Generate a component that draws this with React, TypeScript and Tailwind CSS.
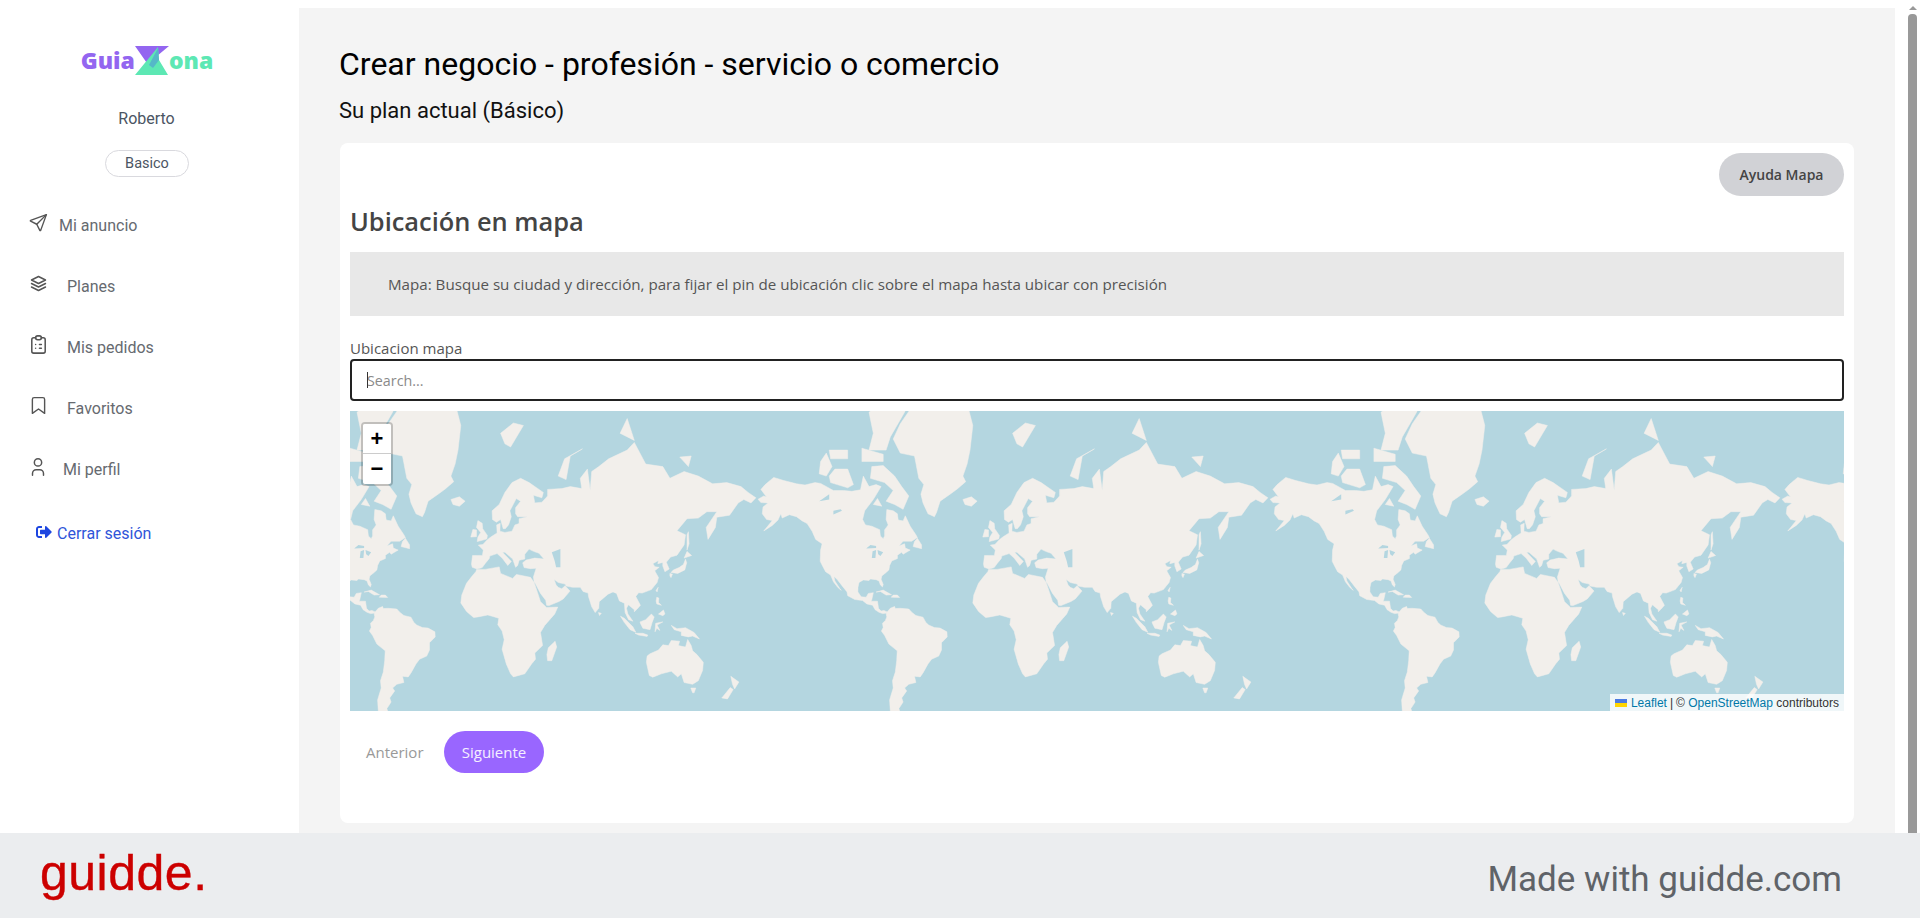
import { FiBookmark } from 'react-icons/fi'
import { TbSend, TbStack2, TbClipboardList, TbUser } from 'react-icons/tb'
import { FaSignOutAlt } from 'react-icons/fa'

type Ring = [number, number][]

// lon/lat outlines, projected to web mercator at zoom 1 below
const LAND: Ring[] = [
  // north america
  [[-168,65.6],[-164,66.5],[-162,66.2],[-166,68.3],[-163,69.5],[-157,71.2],[-150,70.5],[-141,69.7],[-135,69.4],[-128,70],[-124,69.8],[-115,68],[-108,68],[-102,67.8],[-96,68.2],[-94,71.5],[-90,69],[-85,69.5],[-81.5,69],[-87,65.5],[-93,62],[-94.5,59],[-92.5,57],[-88,56.5],[-82.5,55.1],[-82,52.5],[-80,51.3],[-79,52.5],[-79,55],[-76.5,57],[-78,59],[-77.5,62.4],[-73,62],[-70,61],[-69.5,58.8],[-66,58.5],[-64.5,60.3],[-61,56.5],[-57,53],[-56,51.8],[-60,50.2],[-66,50.2],[-69,48],[-65,49],[-64.5,47],[-61,46],[-66,44],[-67,45],[-70,43.5],[-70,41.7],[-74,40.5],[-75.5,38],[-76,35.5],[-78,34],[-81,32],[-81.5,30],[-80,26.8],[-80.5,25.2],[-82,26.5],[-83,29],[-85,29.7],[-89,30.2],[-90,29.2],[-94,29.6],[-97,28],[-97.7,25],[-97.8,22],[-95.5,18.8],[-92,18.5],[-90.5,21],[-87,21.5],[-88,17],[-88.5,15.8],[-84,15.8],[-83.3,11],[-81.5,9],[-79.5,9.5],[-77.3,8.5],[-78.5,7.5],[-80.5,7.3],[-83,8.2],[-85.7,10],[-87.5,13],[-91.5,14],[-94.5,16.2],[-100,17],[-105,19.5],[-105.5,22],[-109,26],[-112.5,30],[-114.7,31.7],[-114,29],[-110.5,24.2],[-109.5,23],[-112,25],[-115,28.5],[-117,32.5],[-120.5,34.5],[-122.5,37.5],[-124.3,40.3],[-124,46],[-123,49],[-127.5,51],[-130,54.5],[-133.5,57.5],[-137,58.5],[-141,60],[-146,60.7],[-151,59.5],[-152,61],[-154,58.8],[-158,56.8],[-164,54.6],[-158,58.6],[-162,59],[-165,61],[-164.5,63.2],[-161,64.5],[-166,64.6]],
  // greenland
  [[-73,78.2],[-68,80.2],[-60,82],[-45,82.6],[-30,83.5],[-20,81.8],[-17,80],[-19,76.5],[-21,74],[-24,71.5],[-22,70.2],[-28,68.4],[-33,67],[-40,65],[-42.5,61.5],[-44,60],[-48.5,61],[-52,64.5],[-53.5,67],[-51.5,69.5],[-55,71],[-58,75.5],[-68,76]],
  // arctic islands
  [[-80,73.7],[-72,71.5],[-67,69],[-62,66.5],[-66,62.5],[-72,64],[-78,65],[-73,68],[-79,70],[-89,71],[-88,73.5]],
  [[-117,70],[-105,68.7],[-101,69.5],[-105,73],[-114,73],[-118,71.5]],
  [[-125,72],[-120,71.5],[-116,73.5],[-120,76],[-124,74.5]],
  [[-90,76.5],[-78,76.5],[-75,78.5],[-65,81.5],[-62,82.5],[-75,83],[-90,81.5],[-87,79]],
  [[-95,74.5],[-80,74.5],[-80,75.8],[-95,76.8]],
  [[-117,75],[-105,75],[-105,76.5],[-118,76.5]],
  [[-87,64],[-81,63.5],[-84,65.8]],
  [[-59,47.7],[-53,46.7],[-53,48.5],[-56,51.5],[-58,50]],
  [[-85,21.9],[-80,23.2],[-74.2,20.2],[-78,19.9],[-82,22.3]],
  [[-74.4,18.5],[-68.5,18.4],[-70,19.9],[-73,19.9]],
  [[-24,65.5],[-18,66.3],[-14,65],[-18,63.5],[-22.5,64]],
  [[11,79],[20,80.3],[27,80],[18,77],[14,77.5]],
  // south america
  [[-77.3,8.5],[-75,11],[-72,12.2],[-71.5,10.8],[-68,11],[-62,10.5],[-60,8.3],[-57,6],[-52,4.8],[-50,1],[-48,-0.7],[-44,-2.5],[-40,-2.9],[-35.2,-5.5],[-35,-9],[-39,-13],[-39,-18],[-41,-22],[-46,-24],[-48.5,-27],[-52,-32.5],[-54,-34.8],[-58,-34.5],[-57,-38],[-62,-39],[-65,-41],[-63.5,-42.5],[-67,-46],[-66,-48],[-69,-51],[-68.3,-52.5],[-65.5,-55],[-71,-55],[-75,-52],[-75.5,-47],[-73,-41],[-73.5,-37],[-71.5,-32],[-70.5,-25],[-70.2,-18.5],[-76,-14],[-79,-8],[-81.3,-5],[-80,-2.5],[-80.5,0.5],[-78.5,2.5],[-77.5,5],[-78,7.5]],
  // eurasia
  [[-9,37],[-9.5,38.8],[-8.8,43.3],[-1.8,43.4],[-1.2,46],[-4.7,48.4],[-1.5,48.7],[1.5,50.8],[4,52],[8.5,53.8],[8.2,57],[10.7,57.6],[10.5,54.5],[14,54],[19,54.5],[21,57],[24,57.5],[24,59.3],[30,60],[23,60],[21.5,61],[21.5,63],[25,65],[22,65.8],[17.5,62],[18.5,60],[16.5,57],[14.3,55.5],[12.8,55.5],[11,59],[8,58],[5.3,59],[5,62],[10,64],[14,67.5],[19,70],[25,71],[31,70],[41,67.5],[40,66],[34,66.7],[35,64.5],[40,64.7],[44,66.5],[44,68.3],[54,68.5],[60,69],[68,68.5],[67,71],[72,73],[74,68],[75,72.5],[80,73.5],[87,75],[100,76.5],[105,77.7],[113,74],[125,73.5],[130,71],[140,72.5],[150,71.5],[160,69.7],[170,70],[180,69],[185,67.5],[190.5,66],[187,64.5],[182,65.5],[178,64.5],[172,60.5],[163,59.8],[162,56],[156.8,51],[155.5,56],[163,61.7],[156,61.7],[150,59.5],[142,59.3],[135,54.7],[141,53],[140,48.5],[135,43.5],[130.5,42.5],[127.5,39.8],[129.5,36],[126.5,34.5],[125,37.7],[125,39.7],[121.5,39],[122,40.7],[118,39],[119.5,37.3],[122.5,37],[119.3,35],[122,31],[121,28],[117,23.5],[110.5,21.2],[108,21.5],[106,19],[109.3,13],[107,10.5],[105,8.6],[105,10],[100.8,13.4],[99.5,11],[100.5,7],[104,2],[101,3],[98.5,8],[98,14.5],[94.5,16],[92.5,21],[90,22],[86.5,20.5],[80.3,15.5],[80,11],[77.5,8],[75,12],[72.8,19],[72.5,21.2],[69,22.3],[67,25],[61.5,25],[57,25.8],[56.3,27],[51.5,28],[48.5,30],[50,26.5],[51.5,25],[54,24],[56.3,26],[59.8,22.5],[55,17.3],[52,15.6],[45,12.8],[43.3,13],[42.7,16.5],[39,21],[35,28],[34.6,28.1],[34,31.3],[36,36.5],[32,36.2],[27.5,36.8],[26.5,39.5],[29,41],[35,42],[41.5,41.5],[38,44.5],[35,45.2],[33,45.8],[31,46.5],[28,44],[28,41.5],[24,40.8],[23,38],[21.5,37],[19.5,41.5],[14,45],[12.3,45],[18.5,40.2],[16,38],[12,42],[8.5,44.3],[3.3,43],[3,41.8],[0,39],[-2,36.8],[-5.5,36]],
  // africa
  [[-5.9,35.8],[0,35.8],[10,37.2],[11,33.5],[19.5,30.5],[22,32.9],[32,31.2],[34.5,28],[37,21.5],[39,15.5],[43.3,11.6],[51.2,11.8],[49,7],[42,-1],[39,-6],[40.5,-15],[35,-20],[35.5,-24],[32.8,-27],[28,-33],[20,-34.8],[18,-33],[15,-27],[12,-17.5],[13.5,-11],[12,-5],[9,-0.5],[9.7,4],[5,5.5],[2,6.3],[-5,5],[-8,4.5],[-13,8.8],[-17,14.7],[-16.3,20],[-13,27.5],[-9.5,31.5],[-6.5,34.5]],
  [[49.3,-12],[50.4,-16],[47,-25],[44,-25],[43.5,-21],[44.5,-16.5]],
  // europe and asia islands
  [[-5.5,50],[1.3,51.2],[1.7,52.7],[-1.6,55.5],[-2,57.6],[-5,58.6],[-6,56],[-3,54],[-5,52]],
  [[-10,52],[-6,52.2],[-6,55],[-8.5,55.2]],
  [[130.8,34],[135.5,33.5],[140.5,35.5],[141.8,39.5],[141,41.4],[139.5,38.5],[136.5,36.8],[132.5,35.5]],
  [[140,42],[145.3,43.3],[142,45.4]],
  [[130,33.5],[131.8,33],[130.8,31],[130,32]],
  [[142,46],[143.5,49],[143,54.3],[142,53]],
  [[79.8,8],[81.8,7.5],[80.5,6]],
  [[120.2,23],[121.8,25],[121,22]],
  [[95.3,5.5],[98,4],[104,-2],[106,-5.8],[102,-4],[98,1]],
  [[105.5,-6.5],[111,-6.5],[114.5,-7.8],[114,-8.7],[108,-7.8]],
  [[109,1.5],[113,3],[117,7],[119,5],[117.5,1],[116,-4],[111,-3],[109.5,0]],
  [[119.5,-5.5],[120,0.5],[125,1.5],[121,-0.8],[123,-4.5],[120.8,-3]],
  [[120.3,16],[120.8,18.5],[122.2,18],[122,15],[124,13],[120.8,14]],
  [[122,7],[125.5,9.8],[126.5,7],[125,5.8]],
  [[131,-1],[135,-3.3],[141,-2.6],[147,-6],[150.8,-10.5],[146,-8.5],[143,-9],[138,-8],[138,-5.5],[133,-4]],
  // australia and new zealand
  [[114,-22],[113.5,-26],[115.5,-34],[118,-35],[124,-33],[131,-31.5],[135.5,-34.8],[138,-33],[140,-38],[146,-39],[150,-37],[153,-31],[153.5,-26],[149,-21],[146,-18.5],[145,-15],[142.5,-10.8],[141,-16],[136,-15],[136.8,-12],[131,-11.5],[129,-15],[125,-14.5],[122,-18],[116,-20.5]],
  [[144.7,-41],[148.2,-41],[147,-43.5],[146,-43.5]],
  [[172.8,-34.5],[178.5,-37.7],[175.5,-41.5],[174,-39]],
  [[172.5,-40.7],[174.5,-41.8],[170.5,-46.5],[166.5,-46]],
  // russian arctic
  [[51.5,71.5],[57,70.7],[60,75.5],[68.5,76.7],[56,75]],
  [[95,79],[105,78],[100,80.8]],
  [[137,75.3],[145,75.5],[143,73.5]],
]

const LAKES: Ring[] = [
  [[47,45],[53,46.5],[53,37],[50,37],[49,40.5]],
  [[-92,46.8],[-85,47],[-85,48],[-89,48.5]],
  [[-88,42],[-85.5,42],[-85,46],[-87.5,45.5]],
  [[-84,46],[-80,45],[-82,43],[-83.5,44]],
  [[-125,65],[-118,67],[-118,65.5]],
  [[-115,62],[-110,62.5],[-109,62],[-115,60.8]],
]

const toPath = (rings: Ring[]) =>
  rings
    .map((ring) => {
      const pts = ring.map(([lon, lat]) => {
        const x = 135 + (lon * 512) / 360
        const y = 213 - 81.49 * Math.log(Math.tan(Math.PI / 4 + (lat * Math.PI) / 360))
        return `${x.toFixed(1)} ${y.toFixed(1)}`
      })
      return `M${pts.join('L')}Z`
    })
    .join('')

const landPath = toPath(LAND)
const lakePath = toPath(LAKES)

const NAV = [
  { label: 'Mi anuncio', icon: TbSend, size: 'h-[21px] w-[21px]', stroke: 1.6, gap: 'mr-[13px]' },
  { label: 'Planes', icon: TbStack2, size: 'h-[21px] w-[21px]', stroke: 1.7, gap: 'mr-[21px]' },
  { label: 'Mis pedidos', icon: TbClipboardList, size: 'h-[23px] w-[23px]', stroke: 1.6, gap: 'mr-[21px]' },
  { label: 'Favoritos', icon: FiBookmark, size: 'h-[21px] w-[21px]', stroke: 1.6, gap: 'mr-[21px]' },
  { label: 'Mi perfil', icon: TbUser, size: 'h-[22px] w-[22px]', stroke: 1.6, gap: 'mr-[17px]' },
]

function Logo() {
  return (
    <div className="flex h-[30px] items-center justify-center font-['Open_Sans',sans-serif] text-[23px] font-extrabold leading-none">
      <span className="text-[#9366f0]">Guia</span>
      <svg viewBox="0 0 34 29" className="h-[29px] w-[34px] shrink-0">
        <path d="M0 0H34L22 10L14 20Z" fill="#9366f0" />
        <path d="M0 29L23 1L24 14L33 29Z" fill="#5de8b4" />
        <path d="M14 19L23 2L24 14L18 22Z" fill="#55b8c8" />
      </svg>
      <span className="text-[#5de8b4]">ona</span>
    </div>
  )
}

function Sidebar() {
  return (
    <aside className="flex w-[299px] shrink-0 flex-col bg-white pt-[45px] font-['Roboto',sans-serif]">
      <div className="pr-[5px]">
        <Logo />
      </div>
      <p className="mt-[33px] pr-[6px] text-center text-[16px] leading-[22px] text-[#4b5563]">Roberto</p>
      <div className="mt-[20px] flex justify-center pr-[5px]">
        <span className="flex h-[27px] w-[84px] items-center justify-center rounded-full border border-[#d9d9de] text-[14.5px] text-[#4b5563]">
          Basico
        </span>
      </div>
      <nav className="mt-[18px] flex flex-col">
        {NAV.map(({ label, icon: Icon, size, stroke, gap }) => (
          <a key={label} className="flex h-[61px] items-center pl-[30px] text-[16px] text-[#666a70]">
            <span className={`${gap} mb-[6px] flex w-[16px] shrink-0 justify-center text-[#555]`}>
              <Icon className={`${size} shrink-0`} strokeWidth={stroke} />
            </span>
            {label}
          </a>
        ))}
      </nav>
      <a className="mt-[3px] flex h-[61px] items-center pl-[36px] text-[16px] text-[#2f55d9]">
        <FaSignOutAlt className="mr-[5px] mb-[3px] h-[16px] w-[16px] shrink-0 text-[#1d46e0]" />
        Cerrar sesión
      </a>
    </aside>
  )
}

function WorldMap() {
  return (
    <div className="relative mt-[10px] h-[300px] overflow-hidden bg-[#b4d6e0]">
      <svg viewBox="0 0 1494 300" className="block h-[300px] w-full blur-[0.7px]">
        {[-1, 0, 1, 2, 3].map((k) => (
          <g key={k} transform={`translate(${k * 512} 0)`}>
            <path d={landPath} fill="#f2efeb" stroke="#f2efeb" strokeWidth="0.5" strokeLinejoin="round" />
            <path d={lakePath} fill="#b4d6e0" />
          </g>
        ))}
      </svg>
      <div className="absolute left-[11px] top-[11px] w-[32px] rounded-[4px] border-2 border-black/20 bg-clip-padding font-['Liberation_Sans',sans-serif]">
        <div className="flex h-[30px] items-center justify-center rounded-t-[2px] border-b border-[#ccc] bg-white text-[22px] font-bold leading-none text-black">+</div>
        <div className="flex h-[30px] items-center justify-center rounded-b-[2px] bg-white text-[22px] font-bold leading-none text-black">−</div>
      </div>
      <div className="absolute bottom-0 right-0 flex h-[17px] items-center bg-white/80 pl-[5px] pr-[5px] font-['Liberation_Sans',sans-serif] text-[12px] leading-none text-[#333]">
        <svg viewBox="0 0 12 8" className="mr-[4px] h-[8px] w-[12px]">
          <rect width="12" height="4" fill="#4C7BE1" />
          <rect y="4" width="12" height="4" fill="#FFD500" />
        </svg>
        <span className="text-[#0078a8]">Leaflet</span>
        <span className="mx-[3px]">|</span>
        <span>©&nbsp;</span>
        <span className="text-[#0078a8]">OpenStreetMap</span>
        <span>&nbsp;contributors</span>
      </div>
    </div>
  )
}

function Card() {
  return (
    <section className="ml-[1px] mt-[18px] h-[680px] w-[1514px] rounded-[8px] bg-white px-[10px] pt-[10px] font-['Open_Sans',sans-serif]">
      <div className="flex justify-end">
        <button className="h-[43px] w-[125px] rounded-full bg-[#d1d2d6] text-[14px] font-semibold text-[#444]">
          Ayuda Mapa
        </button>
      </div>
      <h2 className="mt-[8px] text-[25.4px] font-semibold leading-[34px] text-[#444]">Ubicación en mapa</h2>
      <div className="mt-[14px] flex h-[64px] items-center bg-[#e8e8e8] pl-[38px] text-[15.15px] text-[#555]">
        Mapa: Busque su ciudad y dirección, para fijar el pin de ubicación clic sobre el mapa hasta ubicar con precisión
      </div>
      <label className="mt-[21px] block text-[15px] leading-[22px] text-[#555]">Ubicacion mapa</label>
      <div className="relative">
        <input
          placeholder="Search..."
          readOnly
          className="block h-[42px] w-full rounded-[4px] border-2 border-[#222] bg-white pl-[15px] text-[14.3px] outline-none placeholder:text-[#8a8a8a]"
        />
        {/* caret sitting in the focused input */}
        <span className="absolute left-[17px] top-[13px] h-[16px] w-px bg-[#333]" />
      </div>
      <WorldMap />
      <div className="mt-[20px] flex items-center">
        <span className="ml-[16px] w-[78px] text-[15px] text-[#999]">Anterior</span>
        <button className="h-[42px] w-[100px] rounded-full bg-[#9966ff] text-[15px] text-white/90">Siguiente</button>
      </div>
    </section>
  )
}

export default function App() {
  return (
    <div className="flex h-[918px] w-full flex-col overflow-hidden bg-white">
      <div className="flex h-[833px] shrink-0">
        <Sidebar />
        <main className="mt-[8px] h-[825px] w-[1596px] shrink-0 bg-[#f4f4f4] pl-[40px] pt-[38px] font-['Roboto',sans-serif]">
          <h1 className="text-[32px] leading-[36px] text-black">Crear negocio - profesión - servicio o comercio</h1>
          <p className="mt-[15px] text-[22px] leading-[28px] text-[#111]">Su plan actual (Básico)</p>
          <Card />
        </main>
        <div className="ml-[13px] flex w-[9px] shrink-0 flex-col items-center pt-[6px]">
          <div className="h-0 w-0 border-x-[4px] border-b-[4px] border-x-transparent border-b-[#999]" />
          <div className="mt-[4px] w-[9px] flex-1 rounded-t-[4px] bg-[#999]" />
        </div>
      </div>
      <footer className="flex h-[85px] items-center justify-between bg-[#ebedef] pl-[40px] pr-[78px]">
        <span className="mb-[6px] font-['Liberation_Sans',sans-serif] text-[50px] leading-none tracking-[0.5px] text-[#cc0000] [-webkit-text-stroke:0.4px_#cc0000]">guidde.</span>
        <span className="mt-[9px] font-['Roboto',sans-serif] text-[35px] text-[#5f6368]">Made with guidde.com</span>
      </footer>
    </div>
  )
}
